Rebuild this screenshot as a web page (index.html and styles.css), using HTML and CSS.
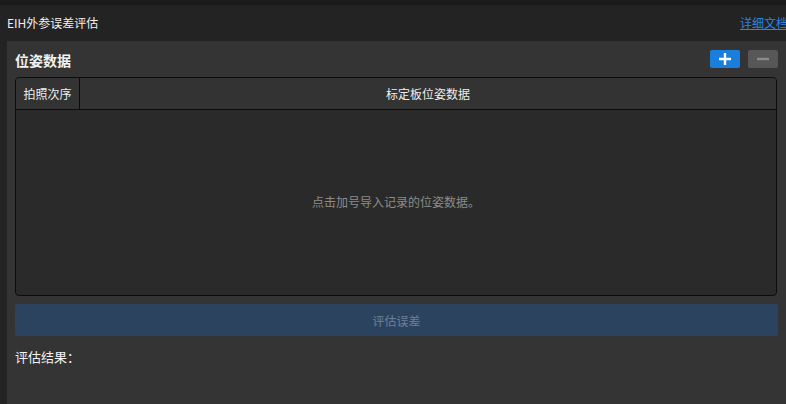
FILE: index.html
```html
<!DOCTYPE html>
<html lang="zh">
<head>
<meta charset="utf-8">
<link rel="stylesheet" href="styles.css">
</head>
<body>
<div class="topstrip"></div>
<div class="header">
  <span class="title">EIH外参误差评估</span>
  <a class="doc" href="#">详细文档</a>
</div>
<div class="panel">
  <div class="sec-head">
    <span class="sec-title">位姿数据</span>
    <div class="btns">
      <button class="ib add"><svg width="14" height="14" viewBox="0 0 14 14"><path d="M7 1v12M1 7h12" stroke="#fff" stroke-width="2.4"/></svg></button>
      <button class="ib del"><svg width="14" height="14" viewBox="0 0 14 14"><path d="M1 7h12" stroke="#8a8a8a" stroke-width="2.4"/></svg></button>
    </div>
  </div>
  <div class="table">
    <div class="thead">
      <div class="th c1">拍照次序</div>
      <div class="th c2">标定板位姿数据</div>
    </div>
    <div class="tbody">点击加号导入记录的位姿数据。</div>
  </div>
  <button class="eval">评估误差</button>
  <div class="result">评估结果：</div>
</div>
</body>
</html>
```
FILE: styles.css
```css
html, body {
  margin: 0;
  padding: 0;
  width: 786px;
  height: 404px;
  overflow: hidden;
  background: #232323;
  font-family: "Noto Sans CJK SC", "Noto Sans", sans-serif;
  color: #e6e6e6;
}
.topstrip {
  height: 5px;
  background: #1b1b1b;
}
.header {
  height: 36px;
  display: flex;
  align-items: center;
  justify-content: space-between;
  padding: 0 0 0 7px;
  background: #232323;
}
.title {
  font-size: 12px;
  color: #f0f0f0;
  margin-top: -2px;
}
.doc {
  font-size: 12px;
  color: #2a86e0;
  text-decoration: underline;
  margin-right: -2px;
  margin-top: -2px;
}
.panel {
  margin-left: 7px;
  height: 363px;
  background: #343434;
  padding: 0 8px;
  display: flex;
  flex-direction: column;
}
.sec-head {
  height: 36px;
  display: flex;
  align-items: center;
  justify-content: space-between;
}
.sec-title {
  font-size: 14px;
  font-weight: bold;
  color: #f2f2f2;
  margin-top: 1px;
}
.btns {
  display: flex;
  gap: 8px;
  margin-top: -1px;
}
.ib {
  width: 30px;
  height: 18px;
  border: none;
  border-radius: 2px;
  padding: 0;
  display: flex;
  align-items: center;
  justify-content: center;
}
.add { background: #1a7fdc; }
.del { background: #575757; }
.table {
  height: 217px;
  border: 1px solid #0c0c0c;
  border-radius: 4px;
  background: #2a2a2a;
  display: flex;
  flex-direction: column;
  overflow: hidden;
  margin-right: 1px;
}
.thead {
  height: 31px;
  display: flex;
  background: #333333;
  border-bottom: 1px solid #0c0c0c;
  font-size: 12px;
  color: #eeeeee;
}
.th {
  display: flex;
  align-items: center;
  justify-content: center;
}
.c1 {
  width: 63px;
  border-right: 1px solid #0c0c0c;
}
.c2 { flex: 1; }
.tbody {
  flex: 1;
  display: flex;
  align-items: center;
  justify-content: center;
  font-size: 12px;
  color: #8c8c8c;
  padding-bottom: 2px;
}
.eval {
  margin-top: 8px;
  height: 32px;
  border: none;
  border-radius: 2px;
  background: #2c4360;
  color: #6e8098;
  font-family: inherit;
  font-size: 12px;
}
.result {
  margin-top: 11px;
  font-size: 13px;
  color: #f2f2f2;
}
```
